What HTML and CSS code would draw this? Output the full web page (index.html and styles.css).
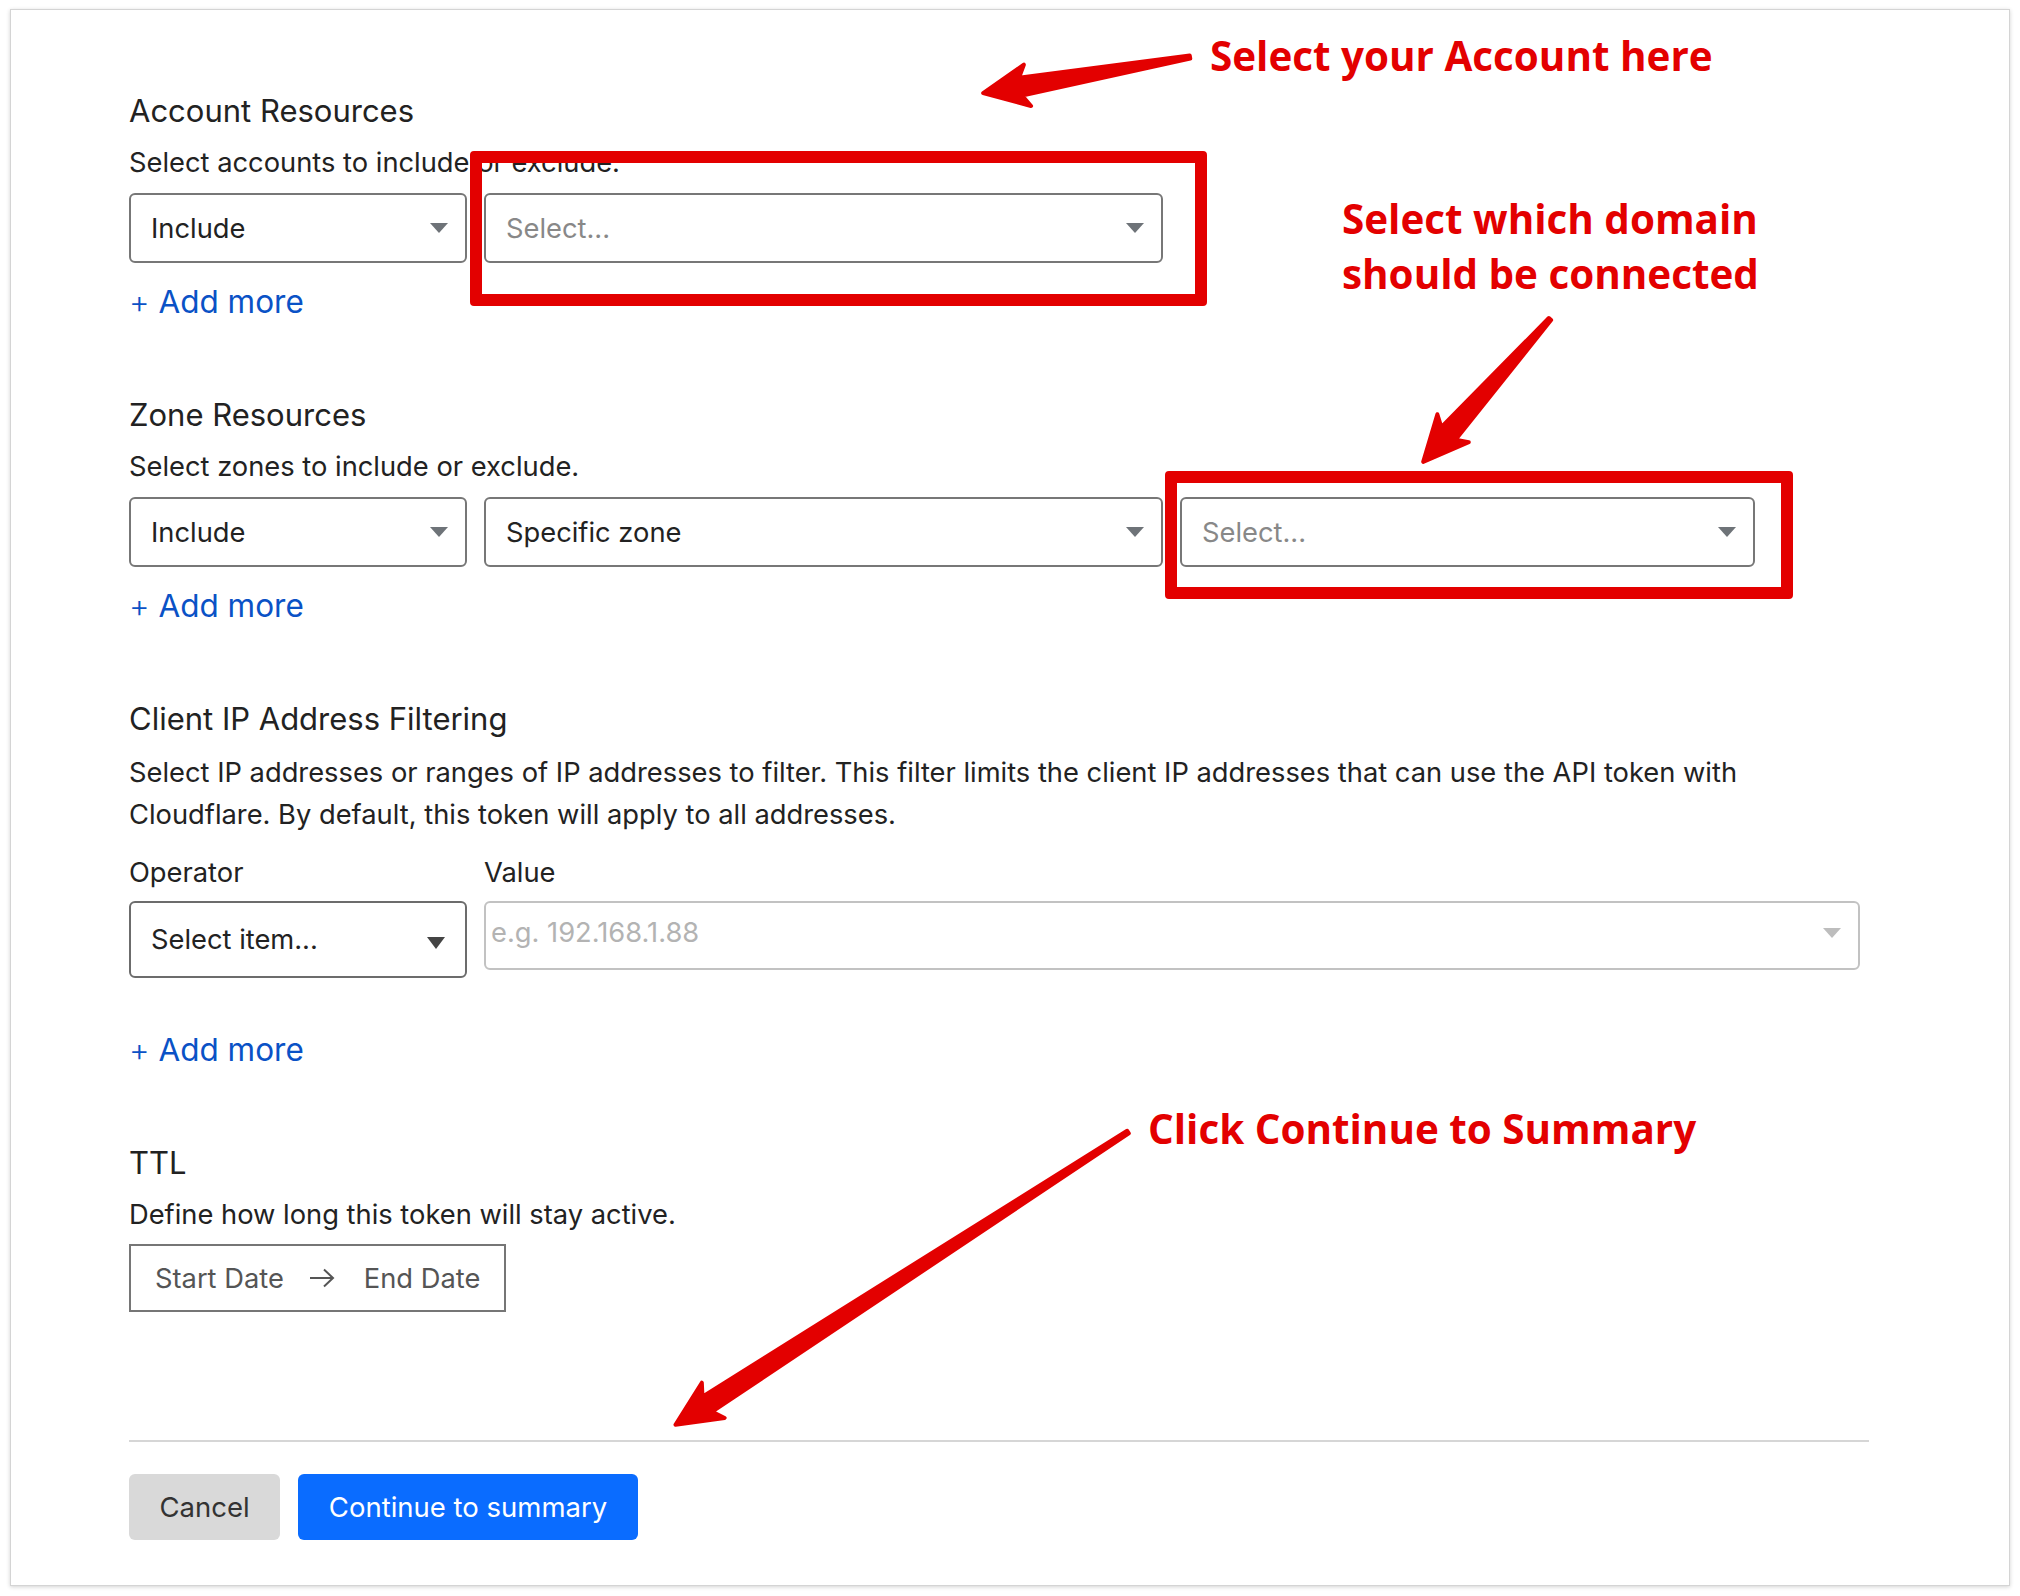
FILE: index.html
```html
<!DOCTYPE html>
<html lang="en">
<head>
    <meta charset="UTF-8">
    <title>Create API Token - Resources</title>
    <link rel="stylesheet" href="styles.css">
</head>
<body>
    <div class="page">
        <div class="card">
            <section class="block">
                <h2 class="block-title">Account Resources</h2>
                <p class="block-desc">Select accounts to include or exclude.</p>
                <div class="field-row">
                    <div class="select w-op"><span>Include</span><i class="caret"></i></div>
                    <div class="select w-main is-empty"><span>Select...</span><i class="caret"></i></div>
                </div>
                <a class="add-more" href="#"><span class="plus">+</span> Add more</a>
            </section>

            <section class="block">
                <h2 class="block-title">Zone Resources</h2>
                <p class="block-desc">Select zones to include or exclude.</p>
                <div class="field-row">
                    <div class="select w-op"><span>Include</span><i class="caret"></i></div>
                    <div class="select w-main"><span>Specific zone</span><i class="caret"></i></div>
                    <div class="select w-zone is-empty"><span>Select...</span><i class="caret"></i></div>
                </div>
                <a class="add-more" href="#"><span class="plus">+</span> Add more</a>
            </section>

            <section class="block">
                <h2 class="block-title">Client IP Address Filtering</h2>
                <p class="block-desc long">Select IP addresses or ranges of IP addresses to filter. This filter limits the client IP addresses that can use the API token with Cloudflare. By default, this token will apply to all addresses.</p>
                <div class="label-row">
                    <label class="w-op">Operator</label>
                    <label>Value</label>
                </div>
                <div class="field-row top">
                    <div class="select w-op tall"><span>Select item...</span><i class="caret dark"></i></div>
                    <div class="value-input"><span>e.g. 192.168.1.88</span><i class="caret light"></i></div>
                </div>
                <a class="add-more spaced" href="#"><span class="plus">+</span> Add more</a>
            </section>

            <section class="block">
                <h2 class="block-title">TTL</h2>
                <p class="block-desc">Define how long this token will stay active.</p>
                <div class="date-range">
                    <span>Start Date</span>
                    <svg class="range-arrow" width="26" height="20" viewBox="0 0 26 20">
                        <path d="M1 10 H24 M15 1.5 L24 10 L15 18.5" fill="none" stroke="#555" stroke-width="2"/>
                    </svg>
                    <span>End Date</span>
                </div>
            </section>

            <div class="form-footer">
                <button class="btn btn-cancel">Cancel</button>
                <button class="btn btn-primary">Continue to summary</button>
            </div>
        </div>

        <!-- annotation layer -->
        <div class="mark mark-account"></div>
        <div class="mark mark-zone"></div>

        <div class="note note-account">Select your Account here</div>
        <div class="note note-zone">Select which domain<br>should be connected</div>
        <div class="note note-continue">Click Continue to Summary</div>

        <svg class="arrows" width="2020" height="1596" viewBox="0 0 2020 1596">
            <g fill="#e30000" stroke="#e30000" stroke-width="4" stroke-linejoin="round">
                <path transform="translate(1190 57) rotate(170.1)" d="M0 -1.5 L172 -9 L165 -21 L210 0 L165 21 L172 9 L0 1.5 Z"/>
                <path transform="translate(1550 319) rotate(131.6)" d="M0 -1.5 L153 -9.5 L146 -21 L191 0 L146 21 L153 9.5 L0 1.5 Z"/>
                <path transform="translate(1128 1132) rotate(147.1)" d="M0 -1.5 L501 -9 L494 -21 L539 0 L494 21 L501 9 L0 1.5 Z"/>
            </g>
        </svg>
    </div>
</body>
</html>
```

FILE: styles.css
```css
* {
    margin: 0;
    padding: 0;
    box-sizing: border-box;
}

body {
    font-family: Inter, 'Noto Sans', sans-serif;
    background: #fff;
    color: #222;
}

.page {
    position: relative;
    width: 2020px;
    height: 1596px;
    padding: 9px 10px 0 10px;
}

.card {
    width: 2000px;
    height: 1577px;
    background: #fff;
    border: 1px solid #d4d4d4;
    box-shadow: 0 1px 4px rgba(0, 0, 0, 0.18);
    padding: 83px 0 0 118px;
}

.block-title {
    font-size: 31px;
    font-weight: 400;
    line-height: 36px;
    color: #222;
}

.block + .block .block-title {
    margin-top: 77px;
}

.block-desc {
    font-size: 27.3px;
    line-height: 36px;
    margin-top: 16px;
    color: #222;
}

.block-desc.long {
    line-height: 42px;
    margin-top: 15px;
    max-width: 1660px;
}

.field-row {
    display: flex;
    gap: 17px;
    margin-top: 12px;
}

.field-row.top {
    align-items: flex-start;
    margin-top: 10px;
}

.select {
    height: 70px;
    border: 2px solid #777;
    border-radius: 6px;
    display: flex;
    align-items: center;
    justify-content: space-between;
    padding: 0 17px 0 20px;
    font-size: 27.3px;
    color: #222;
}

.select.is-empty span {
    color: #888;
}

.select.tall {
    height: 77px;
    border-color: #6c6c6c;
}

.w-op { width: 338px; }
.w-main { width: 679px; }
.w-zone { width: 575px; }

.caret {
    width: 0;
    height: 0;
    border-left: 9.5px solid transparent;
    border-right: 9.5px solid transparent;
    border-top: 10px solid #6e7378;
}

.caret.dark {
    border-top: 12px solid #444;
    margin-top: 6px;
    margin-right: 3px;
}

.caret.light {
    border-top-color: #bdbdbd;
}

.label-row {
    display: flex;
    gap: 17px;
    margin-top: 19px;
    font-size: 27.3px;
    line-height: 36px;
    color: #222;
}

.value-input {
    width: 1376px;
    height: 69px;
    border: 2px solid #c2c2c2;
    border-radius: 6px;
    display: flex;
    align-items: center;
    justify-content: space-between;
    padding: 0 17px 6px 5px;
    font-size: 27.3px;
    color: #b3b3b3;
}

.add-more {
    display: inline-block;
    margin-top: 21px;
    font-size: 31.5px;
    line-height: 36px;
    color: #0a52c6;
    text-decoration: none;
}

.add-more .plus {
    font-weight: 300;
}

.add-more.spaced {
    margin-top: 54px;
}

.date-range {
    display: inline-flex;
    align-items: center;
    gap: 25.5px;
    height: 68px;
    margin-top: 11px;
    padding: 0 24px 0 24px;
    border: 2px solid #767676;
    font-size: 27.3px;
    color: #555;
}

.range-arrow {
    margin-right: 3px;
}

.form-footer {
    width: 1740px;
    margin-top: 128px;
    padding-top: 32px;
    border-top: 2px solid #d6d6d6;
    display: flex;
    gap: 18px;
}

.btn {
    height: 66px;
    border: none;
    border-radius: 6px;
    font-family: Inter, 'Noto Sans', sans-serif;
    font-size: 27.5px;
    cursor: pointer;
}

.btn-cancel {
    background: #d9d9d9;
    color: #333;
    width: 151px;
}

.btn-primary {
    background: #0a6cff;
    color: #fff;
    width: 340px;
}

/* annotations */
.mark {
    position: absolute;
    border: 12px solid #e30000;
    border-radius: 4px;
}

.mark-account {
    left: 470px;
    top: 151px;
    width: 737px;
    height: 155px;
}

.mark-zone {
    left: 1165px;
    top: 471px;
    width: 628px;
    height: 128px;
}

.note {
    position: absolute;
    font-family: 'Open Sans', sans-serif;
    font-weight: 700;
    font-size: 40.4px;
    line-height: 41px;
    color: #e30000;
    white-space: nowrap;
}

.note-account {
    left: 1210px;
    top: 35px;
}

.note-zone {
    left: 1342px;
    top: 191px;
    line-height: 55px;
}

.note-continue {
    left: 1148px;
    top: 1108px;
}

.arrows {
    position: absolute;
    left: 0;
    top: 0;
    pointer-events: none;
}
```
